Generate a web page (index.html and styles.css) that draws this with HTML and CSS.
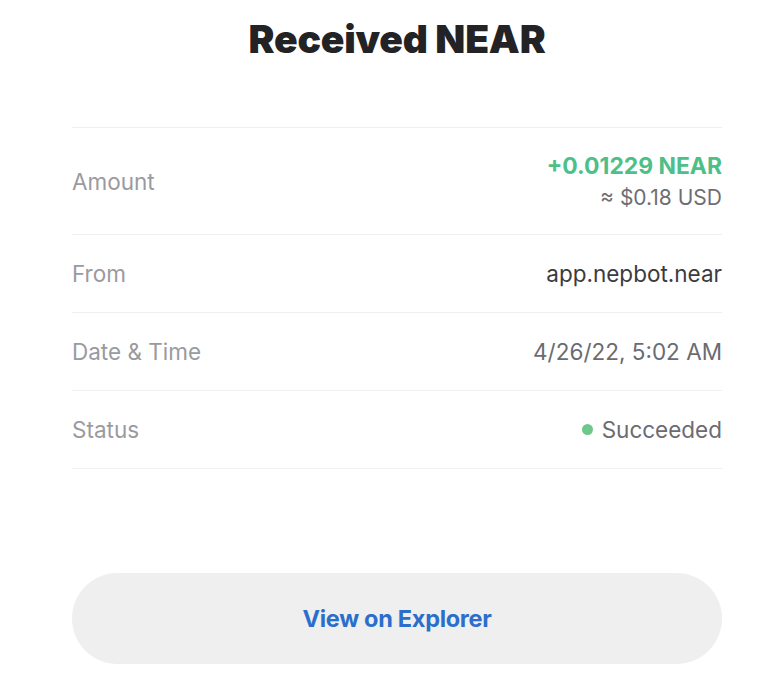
FILE: index.html
```html
<!DOCTYPE html>
<html>
<head>
<meta charset="utf-8">
<link rel="stylesheet" href="styles.css">
</head>
<body>
<div class="page">
  <h1 class="title">Received NEAR</h1>
  <div class="details">
    <div class="row row-amount">
      <div class="label">Amount</div>
      <div class="value-stack">
        <div class="amount">+0.01229 NEAR</div>
        <div class="usd">≈ $0.18 USD</div>
      </div>
    </div>
    <div class="row">
      <div class="label">From</div>
      <div class="value">app.nepbot.near</div>
    </div>
    <div class="row">
      <div class="label">Date &amp; Time</div>
      <div class="value muted">4/26/22, 5:02 AM</div>
    </div>
    <div class="row">
      <div class="label">Status</div>
      <div class="value muted status"><span class="dot"></span>Succeeded</div>
    </div>
  </div>
  <button class="explorer">View on Explorer</button>
</div>
</body>
</html>
```

FILE: styles.css
```css
html, body {
  margin: 0;
  padding: 0;
  background: #ffffff;
}
body {
  font-family: Inter, "Noto Sans", sans-serif;
  color: #27272a;
}
.page {
  width: 650px;
  padding-left: 72px;
  display: flex;
  flex-direction: column;
}
.title {
  margin: 0;
  padding-top: 15px;
  height: 127px;
  box-sizing: border-box;
  text-align: center;
  font-size: 39px;
  font-weight: 900;
  letter-spacing: -0.2px;
  color: #232326;
  line-height: 48px;
}
.details {
  border-top: 1px solid #f0f0f0;
}
.row {
  display: flex;
  justify-content: space-between;
  align-items: center;
  height: 77px;
  border-bottom: 1px solid #f0f0f0;
  font-size: 22.5px;
}
.row-amount {
  height: 106px;
}
.label {
  color: #9a9a9f;
}
.value-stack {
  display: flex;
  flex-direction: column;
  align-items: flex-end;
  gap: 4px;
  padding-top: 1px;
}
.amount {
  color: #4dbf88;
  font-weight: 700;
  font-size: 22.9px;
  line-height: 27px;
}
.usd {
  color: #6e6e74;
  font-size: 21px;
  line-height: 27px;
}
.value {
  color: #3b3b40;
}
.muted {
  color: #6b6b72;
}
.status {
  display: flex;
  align-items: center;
  gap: 9px;
}
.dot {
  width: 11px;
  height: 11px;
  border-radius: 50%;
  background: #6cc98a;
}
.explorer {
  margin-top: 104px;
  height: 91px;
  border: none;
  border-radius: 46px;
  background: #efefef;
  color: #2b6ecc;
  font-family: Inter, "Noto Sans", sans-serif;
  font-size: 23.5px;
  font-weight: 700;
  letter-spacing: -0.3px;
}
```
